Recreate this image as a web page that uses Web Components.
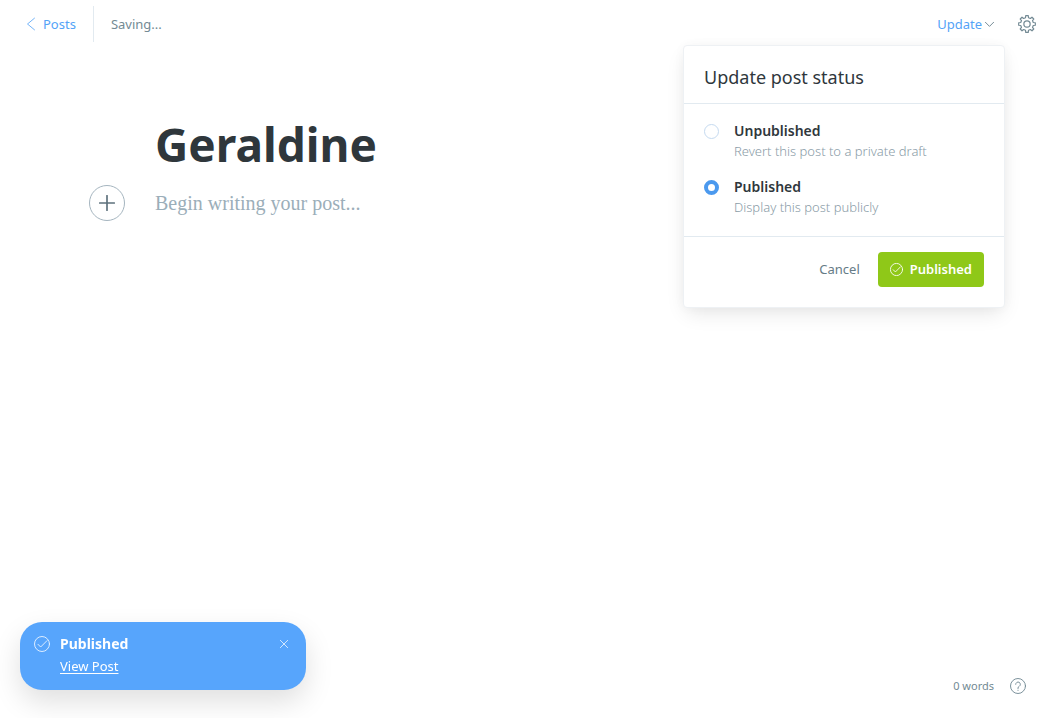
<!DOCTYPE html>
<html lang="en">
<head>
<meta charset="utf-8">
<meta name="viewport" content="width=device-width, initial-scale=1">
<title>Geraldine – Editor</title>
<style>
  :root {
    --blue: #54a3f7;
    --green: #8fc818;
    --dark: #2f373c;
    --mid: #738a94;
    --light: #98a9b3;
    --line: #e2eaf0;
  }
  html, body { height: 100%; }
  body {
    margin: 0;
    background: #fff;
    color: var(--dark);
    font: 13px/20px "Noto Sans", "Open Sans", sans-serif;
  }
</style>
</head>
<body>
<post-editor>
  <editor-header slot="header" status="Saving..."></editor-header>
  <post-canvas heading="Geraldine" prompt="Begin writing your post..."></post-canvas>
  <word-count slot="footer">0 words</word-count>
  <toast-message slot="toast" heading="Published"><a href="#post">View Post</a></toast-message>
</post-editor>

<script>
const BASE = `*{box-sizing:border-box}
  button,input,textarea{font:inherit;color:inherit;margin:0;padding:0;border:0;background:none;outline:0}
  button{cursor:pointer}
  a{color:inherit;text-decoration:none}`;

const define = (name, render) => customElements.define(name, class extends HTMLElement {
  connectedCallback() {
    if (this.shadowRoot) return;
    const template = document.createElement('template');
    template.innerHTML = render(this);
    this.attachShadow({ mode: 'open' }).append(template.content.cloneNode(true));
  }
});

function gearPath(teeth, outer, inner) {
  let d = '';
  const step = Math.PI * 2 / teeth;
  for (let i = 0; i < teeth; i++) {
    const c = i * step - Math.PI / 2;
    [[-0.30, inner], [-0.19, outer], [0.19, outer], [0.30, inner]].forEach(([k, r], n) => {
      const a = c + k * step;
      d += (i || n ? 'L' : 'M') + (12 + r * Math.cos(a)).toFixed(2) + ' ' + (12 + r * Math.sin(a)).toFixed(2);
    });
  }
  return d + 'Z';
}

const ICONS = {
  back: '<path d="M18 2 6 12l12 10"/>',
  down: '<path d="M1 6l11 11L23 6"/>',
  gear: `<path d="${gearPath(8, 11.2, 8.6)}"/><circle cx="12" cy="12" r="4.2"/>`,
  plus: '<path d="M12 1v22M1 12h22"/>',
  check: '<circle cx="12" cy="12" r="11.25"/><path d="M6 12.500l4 4 9.500-9.500"/>',
  close: '<path d="M1 1l22 22M23 1 1 23"/>',
  help: '<circle cx="12" cy="12" r="11.25"/><path d="M8.500 9.500a3.500 3.500 0 1 1 5.300 3c-1.100.7-1.800 1.300-1.800 2.500v.8M12 18.300v.4"/>'
};

define('line-icon', el => {
  const size = el.getAttribute('size');
  return `<style>:host{display:block;flex:none}svg{display:block;fill:none;stroke:currentColor;stroke-linecap:round;stroke-linejoin:round}</style>
  <svg width="${size}" height="${size}" viewBox="0 0 24 24" stroke-width="${el.getAttribute('weight') || 1.4}" aria-hidden="true">${ICONS[el.getAttribute('name')]}</svg>`;
});

define('post-editor', () => `<style>${BASE}
  :host{display:flex;flex-direction:column;min-height:100vh}
  main{flex:1}
  footer{display:flex;justify-content:flex-end;padding:0 24px 22px}
  .toast{position:fixed;left:20px;bottom:28px}
  </style>
  <slot name="header"></slot>
  <main><slot></slot></main>
  <footer><slot name="footer"></slot></footer>
  <div class="toast"><slot name="toast"></slot></div>`);

define('editor-header', el => `<style>${BASE}
  :host{display:block}
  header{display:flex;align-items:center;height:48px;padding:0 14px 0 24px}
  .back{display:flex;align-items:center;gap:5px;height:36px;padding-right:17px;border-right:1px solid var(--line);color:var(--blue)}
  .status{margin-left:17px;color:var(--mid)}
  .actions{display:flex;align-items:center;gap:24px;margin-left:auto}
  .menu{position:relative}
  .update{display:flex;align-items:center;gap:3px;color:var(--blue)}
  .update line-icon,.gear{color:var(--mid)}
  .drop{position:absolute;top:31px;right:-11px;width:322px;z-index:2}
  </style>
  <header>
    <a class="back" href="#posts"><line-icon name="back" size="14"></line-icon>Posts</a>
    <span class="status">${el.getAttribute('status')}</span>
    <div class="actions">
      <div class="menu">
        <button class="update" aria-expanded="true">Update<line-icon name="down" size="9" weight="2.6"></line-icon></button>
        <status-menu class="drop"></status-menu>
      </div>
      <button class="gear" aria-label="Settings"><line-icon name="gear" size="18" weight="1.6"></line-icon></button>
    </div>
  </header>`);

define('status-menu', () => `<style>${BASE}
  :host{display:block}
  form{margin:0;border:1px solid #eef1f4;border-radius:4px;background:#fff;box-shadow:0 8px 20px -4px #0000001c,0 0 12px #00000008}
  h2{margin:0;padding:19px 20px 14px;border-bottom:1px solid var(--line);font-weight:400;font-size:18px;line-height:24px}
  .options{display:flex;flex-direction:column;gap:16px;padding:17px 20px 19px}
  .buttons{display:flex;justify-content:flex-end;align-items:center;gap:18px;padding:15px 20px 20px;border-top:1px solid var(--line)}
  button{height:35px;padding-bottom:1px}
  .cancel{color:#667b86}
  .publish{display:flex;align-items:center;gap:7px;padding:0 12px 1px;border-radius:4px;background:var(--green);color:#fff;font-weight:600}
  </style>
  <form>
    <h2>Update post status</h2>
    <div class="options">
      <status-option label="Unpublished">Revert this post to a private draft</status-option>
      <status-option label="Published" checked>Display this post publicly</status-option>
    </div>
    <div class="buttons">
      <button type="button" class="cancel">Cancel</button>
      <button type="button" class="publish"><line-icon name="check" size="13" weight="1.6"></line-icon>Published</button>
    </div>
  </form>`);

define('status-option', el => `<style>${BASE}
  :host{display:block}
  label{display:grid;grid-template-columns:15px 1fr;column-gap:15px;align-items:center;cursor:pointer}
  input{appearance:none;width:15px;height:15px;border:1px solid #c5daf0;border-radius:50%;background:#fff}
  input:checked{border:4px solid #4b99ee}
  b{font-weight:600;font-size:14px;line-height:20px}
  span{grid-column:2;color:#8a9ca7;font-weight:300}
  </style>
  <label><input type="radio" name="status"${el.hasAttribute('checked') ? ' checked' : ''}><b>${el.getAttribute('label')}</b><span><slot></slot></span></label>`);

define('post-canvas', el => `<style>${BASE}
  :host{display:block;max-width:740px;margin:0 auto;padding-top:64px}
  .title{display:block;width:100%;height:64px;font-size:46px;line-height:64px;font-weight:700}
  .body{position:relative;margin-top:9px}
  .add{position:absolute;left:-66px;top:0;display:grid;place-items:center;width:36px;height:36px;border:1px solid #a5b5bf;border-radius:50%;color:#5d717c}
  textarea{display:block;width:100%;height:64px;padding-top:2px;resize:none;font:20px/32px "Liberation Serif",serif}
  textarea::placeholder{color:#9baeb9;opacity:1}
  </style>
  <input class="title" aria-label="Post title" value="${el.getAttribute('heading')}">
  <div class="body">
    <button class="add" aria-label="Add a card"><line-icon name="plus" size="16" weight="2.5"></line-icon></button>
    <textarea aria-label="Post content" placeholder="${el.getAttribute('prompt')}"></textarea>
  </div>`);

define('word-count', () => `<style>${BASE}
  :host{display:flex;align-items:center;gap:16px;color:var(--mid);font-size:11px}
  </style>
  <span><slot></slot></span>
  <a href="#help" aria-label="Help"><line-icon name="help" size="16"></line-icon></a>`);

define('toast-message', el => `<style>${BASE}
  :host{display:block;width:286px;color:#fff}
  section{display:grid;grid-template-columns:16px 1fr 8px;column-gap:10px;row-gap:2px;align-items:center;padding:12px 18px 14px 14px;border-radius:22px;background:#57a5fc;box-shadow:0 12px 28px #00000020}
  b{font-weight:700;font-size:14px}
  line-icon{opacity:.85}
  .text{grid-column:2}
  ::slotted(a){color:#fff;text-decoration:underline;text-underline-offset:2px}
  </style>
  <section role="status">
    <line-icon name="check" size="16"></line-icon>
    <b>${el.getAttribute('heading')}</b>
    <button aria-label="Close"><line-icon name="close" size="8" weight="2.6"></line-icon></button>
    <span class="text"><slot></slot></span>
  </section>`);
</script>
</body>
</html>
